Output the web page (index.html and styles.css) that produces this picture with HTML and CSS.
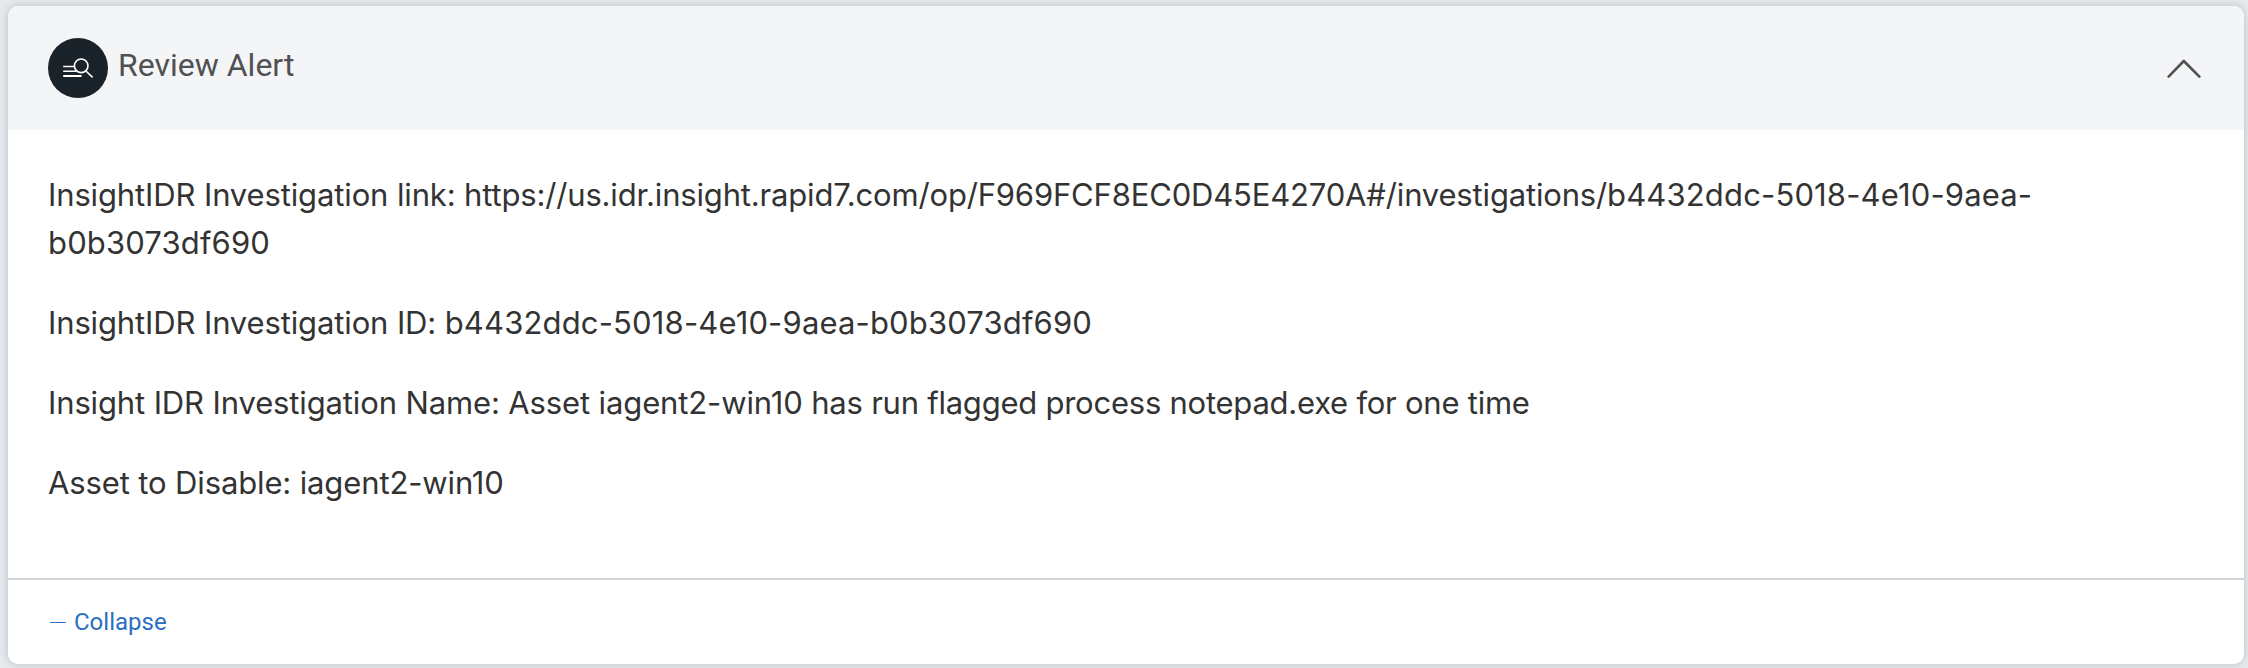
FILE: index.html
```
<!DOCTYPE html>
<html lang="en">
<head>
<meta charset="utf-8">
<title>Review Alert</title>
<link rel="stylesheet" href="styles.css">
</head>
<body>
<article class="card">
  <header class="card-header">
    <svg class="badge" viewBox="0 0 60 60" aria-hidden="true">
      <circle cx="30" cy="30" r="30" fill="#1a222a"/>
      <g fill="none" stroke="#fff" stroke-width="1.6">
        <path d="M15.2 28.5H27M15.2 33.2H28.5M38.2 33.2L44.6 39.4"/>
        <path d="M15.2 38H33.6" stroke-width="2"/>
        <circle cx="33.2" cy="27.8" r="6.8" fill="#1a222a"/>
      </g>
    </svg>
    <h1 class="title">Review Alert</h1>
    <svg class="chevron" viewBox="0 0 34 20" aria-hidden="true"><path d="M1.6 17.6L16.8 2L32.4 17.6"/></svg>
  </header>
  <div class="card-body">
    <p><span class="label">InsightIDR Investigation link: </span><span class="url">https://us.idr.insight.rapid7.com/op/F969FCF8EC0D45E4270A#/investigations/</span><span class="uuid">b4432ddc-5018-4e10-9aea-</span><span class="uuid">b0b3073df690</span></p>
    <p>InsightIDR Investigation ID: <span class="uuid">b4432ddc-5018-4e10-9aea-b0b3073df690</span></p>
    <p>Insight IDR Investigation Name: Asset iagent2-win10 <span class="detail">has run flagged process notepad.exe for one time</span></p>
    <p>Asset to Disable: iagent2-win10</p>
  </div>
  <footer class="card-footer">
    <span class="dash"></span>
    <span class="collapse">Collapse</span>
  </footer>
</article>
</body>
</html>
```
FILE: styles.css
```
* { box-sizing: border-box; }
body {
  margin: 0;
  height: 668px;
  padding: 6px 4px 4px 8px;
  background: #e6eaed;
  overflow: hidden;
}
.card {
  height: 658px;
  display: flex;
  flex-direction: column;
  background: #fff;
  border-radius: 10px;
  box-shadow: 0 0 8px rgba(30, 40, 50, .22);
}
.card-header {
  height: 124px;
  flex: none;
  display: flex;
  align-items: center;
  padding: 0 43px 0 40px;
  background: #f4f5f7;
  border-radius: 10px 10px 0 0;
}
.badge { width: 60px; height: 60px; }
.title {
  margin: 0 auto 7px 10px;
  font: 400 32px/40px Roboto, sans-serif;
  color: #505152;
}
.chevron { width: 34px; height: 20px; margin-top: 2px; }
.chevron path {
  fill: none;
  stroke: #505152;
  stroke-width: 2.6;
  stroke-linecap: round;
  stroke-linejoin: round;
}
.card-body {
  flex: 1;
  padding: 41px 40px 0;
  font: 400 31px/48px Inter, sans-serif;
  letter-spacing: -.13px;
  color: #333;
}
.card-body p { margin: 0 0 32px; }
.url { letter-spacing: -.17px; }
.uuid { letter-spacing: .15px; }
.detail { letter-spacing: -.24px; }
.card-footer {
  height: 86px;
  flex: none;
  display: flex;
  align-items: center;
  gap: 8px;
  padding-left: 42px;
  border-top: 2px solid #d0d4d8;
}
.dash { width: 16px; height: 1px; background: #2a6fc1; }
.collapse {
  font: 400 24px/30px Roboto, sans-serif;
  color: #2a6fc1;
}
```
